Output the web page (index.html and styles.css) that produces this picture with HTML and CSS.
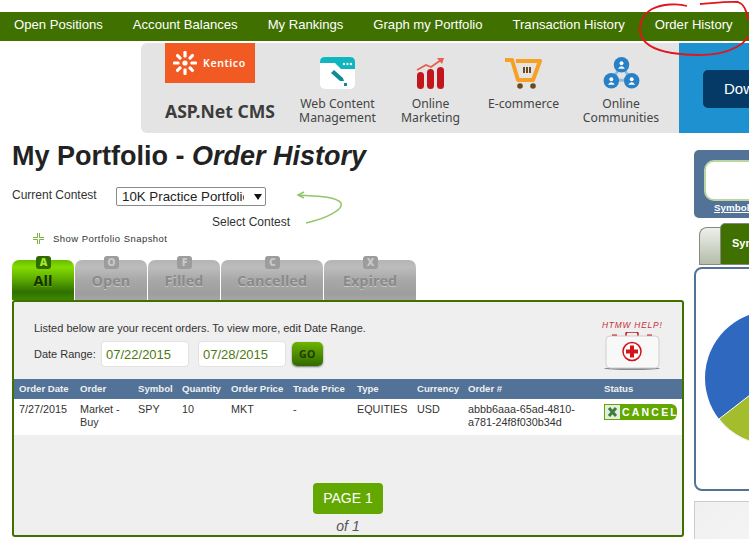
FILE: index.html
```html
<!DOCTYPE html>
<html lang="en">
<head>
    <meta charset="UTF-8">
    <title>My Portfolio - Order History</title>
    <link rel="stylesheet" href="styles.css">
</head>
<body>
    <nav class="topnav">
        <a>Open Positions</a>
        <a>Account Balances</a>
        <a>My Rankings</a>
        <a>Graph my Portfolio</a>
        <a>Transaction History</a>
        <a>Order History</a>
    </nav>
    <svg class="scribble" width="749" height="60" viewBox="0 0 749 60" fill="none" stroke="#e0161c" stroke-width="1.8">
        <path d="M687 6 C678 3 662 4 652 9 C643 14 639 24 640 32 C642 44 654 50 672 53 C692 56 716 56 730 50 C740 46 746 42 748 36"/>
        <path d="M700 4 C714 3 728 1 738 2 C744 4 747 12 748 20"/>
    </svg>

    <div class="ad">
        <div class="ad-brand">
            <div class="kentico-logo">
                <svg width="24" height="24" viewBox="-12 -12 24 24" fill="#fff">
                    <circle r="2.6"/>
                    <rect x="-1.6" y="-12" width="3.2" height="6.5" rx="1.2"/>
                    <rect x="-1.6" y="-12" width="3.2" height="6.5" rx="1.2" transform="rotate(45)"/>
                    <rect x="-1.6" y="-12" width="3.2" height="6.5" rx="1.2" transform="rotate(90)"/>
                    <rect x="-1.6" y="-12" width="3.2" height="6.5" rx="1.2" transform="rotate(135)"/>
                    <rect x="-1.6" y="-12" width="3.2" height="6.5" rx="1.2" transform="rotate(180)"/>
                    <rect x="-1.6" y="-12" width="3.2" height="6.5" rx="1.2" transform="rotate(225)"/>
                    <rect x="-1.6" y="-12" width="3.2" height="6.5" rx="1.2" transform="rotate(270)"/>
                    <rect x="-1.6" y="-12" width="3.2" height="6.5" rx="1.2" transform="rotate(315)"/>
                </svg>
                <span>Kentico</span>
            </div>
            <div class="ad-cms">ASP.Net CMS</div>
        </div>
        <div class="ad-features">
            <div class="feature">
                <svg width="35" height="32" viewBox="0 0 35 32">
                    <rect width="35" height="32" rx="5" fill="#fff"/>
                    <path d="M0 6 V5 Q0 0 5 0 H30 Q35 0 35 5 V12 H21 L15 6Z" fill="#0fb5bf"/>
                    <circle cx="24" cy="7" r="1.200" fill="#fff"/><circle cx="27.500" cy="7" r="1.200" fill="#fff"/><circle cx="31" cy="7" r="1.200" fill="#fff"/>
                    <path d="M11 16 L14 13 L23 21 L24 24 L20 24Z" fill="#0d8c98"/>
                    <rect x="24" y="26" width="3" height="3" fill="#0d8c98"/>
                </svg>
                <span>Web Content Management</span>
            </div>
            <div class="feature">
                <svg width="30" height="32" viewBox="0 0 30 32">
                    <path d="M1 13 L10 8 L15 10 L25 3" fill="none" stroke="#e8604c" stroke-width="1.800"/>
                    <path d="M21 1 H28 L26 7Z" fill="#e8604c"/>
                    <rect x="1" y="15" width="7" height="17" rx="3.500" fill="#c3161c"/>
                    <rect x="11" y="12" width="7" height="20" rx="3.500" fill="#c3161c"/>
                    <rect x="21" y="10" width="7" height="22" rx="3.500" fill="#c3161c"/>
                </svg>
                <span>Online Marketing</span>
            </div>
            <div class="feature">
                <svg width="39" height="32" viewBox="0 0 39 32">
                    <path d="M1 3 H8 L14 23 H29 L36 4 H12" fill="none" stroke="#f7a023" stroke-width="4" stroke-linejoin="round"/>
                    <rect x="19" y="10" width="2" height="6" fill="#6b4a20"/><rect x="22" y="10" width="2" height="6" fill="#6b4a20"/><rect x="25" y="10" width="2" height="6" fill="#6b4a20"/>
                    <circle cx="16" cy="29" r="2.800" fill="#6b4a20"/><circle cx="29" cy="29" r="2.800" fill="#6b4a20"/>
                </svg>
                <span>E-commerce</span>
            </div>
            <div class="feature">
                <svg width="37" height="32" viewBox="0 0 37 33">
                    <path d="M18.500 9 L8 24 H29Z" fill="none" stroke="#8dbde0" stroke-width="3"/>
                    <circle cx="18.500" cy="8" r="8" fill="#2a80c4"/>
                    <circle cx="8" cy="24.500" r="8" fill="#2a80c4"/>
                    <circle cx="29" cy="24.500" r="8" fill="#2a80c4"/>
                    <circle cx="18.500" cy="6.500" r="2" fill="#fff"/><path d="M15 12 Q18.500 7 22 12Z" fill="#fff"/>
                    <circle cx="8" cy="23" r="2" fill="#fff"/><path d="M4.500 28.500 Q8 23.500 11.500 28.500Z" fill="#fff"/>
                    <circle cx="29" cy="23" r="2" fill="#fff"/><path d="M25.500 28.500 Q29 23.500 32.500 28.500Z" fill="#fff"/>
                </svg>
                <span>Online Communities</span>
            </div>
        </div>
        <div class="ad-cta"><div class="ad-button">Download</div></div>
    </div>

    <div class="page">
        <main class="main">
            <h1>My Portfolio - <em>Order History</em></h1>

            <div class="contest">
                <div class="contest-row">
                    <label>Current Contest</label>
                    <div class="select">
                        <span class="select-text">10K Practice Portfolio</span>
                        <span class="select-arrow"></span>
                    </div>
                    <svg class="contest-arrow" width="50" height="36" viewBox="0 0 50 36" fill="none" stroke="#92c56a" stroke-width="1.500">
                        <path d="M2 4 C18 5 40 5 45 12 C48 18 32 27 10 32"/>
                        <path d="M8 1 L2 4 L8 7"/>
                    </svg>
                </div>
                <div class="contest-hint">Select Contest</div>
            </div>

            <div class="snapshot">
                <svg width="11" height="11" viewBox="0 0 11 11" fill="none" stroke="#7ab33c" stroke-width="1">
                    <path d="M4.500 0 V4.500 H0 M6.500 0 V4.500 H11 M4.500 11 V6.500 H0 M6.500 11 V6.500 H11"/>
                </svg>
                <span>Show Portfolio Snapshot</span>
            </div>

            <div class="tabs">
                <div class="tab tab-all active"><b>A</b>All</div>
                <div class="tab"><b>O</b>Open</div>
                <div class="tab"><b>F</b>Filled</div>
                <div class="tab tab-cancelled"><b>C</b>Cancelled</div>
                <div class="tab tab-expired"><b>X</b>Expired</div>
            </div>

            <section class="panel">
                <div class="panel-top">
                    <div>
                        <p class="intro">Listed below are your recent orders. To view more, edit Date Range.</p>
                        <div class="dates">
                            <span>Date Range:</span>
                            <div class="date-input">07/22/2015</div>
                            <div class="date-input">07/28/2015</div>
                            <div class="go">GO</div>
                        </div>
                    </div>
                    <div class="help">
                        <div class="help-title">HTMW HELP!</div>
                        <svg width="58" height="38" viewBox="0 0 58 38">
                            <path d="M24 4 V2 Q24 0 26 0 H34 Q36 0 36 2 V4" fill="none" stroke="#c3161c" stroke-width="1.500"/>
                            <rect x="10" y="2.500" width="5" height="1.500" fill="#c3161c"/><rect x="45" y="2.500" width="5" height="1.500" fill="#c3161c"/>
                            <ellipse cx="30" cy="36.500" rx="28" ry="1.500" fill="#8a8a8a"/>
                            <rect x="4" y="4" width="53" height="32" rx="4" fill="#f8f8f8" stroke="#cfcfcf"/>
                            <circle cx="30" cy="19.500" r="9" fill="#fff" stroke="#d3121a" stroke-width="1.500"/>
                            <path d="M28 13.500 H32 V17.500 H36 V21.500 H32 V25.500 H28 V21.500 H24 V17.500 H28Z" fill="#d3121a"/>
                        </svg>
                    </div>
                </div>

                <div class="orders">
                    <div class="orders-row orders-head">
                        <span>Order Date</span><span>Order</span><span>Symbol</span><span>Quantity</span><span>Order Price</span><span>Trade Price</span><span>Type</span><span>Currency</span><span>Order #</span><span>Status</span>
                    </div>
                    <div class="orders-row orders-body">
                        <span>7/27/2015</span><span>Market - Buy</span><span>SPY</span><span>10</span><span>MKT</span><span>-</span><span>EQUITIES</span><span>USD</span><span class="order-id">abbb6aaa-65ad-4810-a781-24f8f030b34d</span>
                        <span class="cancel">
                            <svg width="15" height="14" viewBox="0 0 15 14">
                                <rect width="15" height="14" fill="#e4eee0"/>
                                <path d="M4 3 L11 11 M11 3 L4 11" stroke="#3f7d3a" stroke-width="3"/>
                            </svg>
                            <i>CANCEL</i>
                        </span>
                    </div>
                </div>

                <div class="pager">
                    <div class="page-btn">PAGE 1</div>
                    <div class="page-of">of 1</div>
                </div>
            </section>
        </main>

        <aside class="side">
            <div class="lookup">
                <div class="lookup-input"></div>
                <a class="lookup-link">Symbol Lookup</a>
            </div>
            <div class="side-tabs">
                <div class="side-tab"></div>
                <div class="side-tab side-tab-on">Symbol</div>
            </div>
            <div class="pie-box">
                <svg width="55" height="220" viewBox="0 0 55 220">
                    <circle cx="76" cy="109" r="67" fill="#2f69bf"/>
                    <path d="M76 109 L23 150 A67 67 0 0 0 76 176Z" fill="#a3bd2c" stroke="#fff"/>
                </svg>
            </div>
            <div class="side-box"></div>
        </aside>
    </div>
</body>
</html>
```

FILE: styles.css
```css
html, body {
    overflow: hidden;
}
body {
    margin: 0;
    width: 749px;
    height: 539px;
    padding-top: 12px;
    box-sizing: border-box;
    font-family: "Liberation Sans", Arial, sans-serif;
    color: #333;
    background: #fff;
}

.topnav {
    display: flex;
    gap: 30px;
    height: 29px;
    box-sizing: border-box;
    padding: 5px 0 0 14px;
    line-height: 15px;
    background: #3f7000;
    color: #fff;
    font-size: 13.1px;
    white-space: nowrap;
}
.scribble {
    position: absolute;
    top: 0;
    left: 0;
}

.ad {
    display: flex;
    height: 90px;
    margin: 2px 0 0 141px;
    background: #e4e4e4;
    border-radius: 6px 0 0 6px;
    font-family: "Noto Sans", sans-serif;
    overflow: hidden;
}
.ad-brand {
    width: 110px;
    margin-left: 24px;
    flex: none;
}
.kentico-logo {
    display: flex;
    align-items: center;
    gap: 6px;
    width: 90px;
    height: 40px;
    padding-left: 8px;
    box-sizing: border-box;
    background: #f15a22;
    color: #fff;
    font-size: 10.5px;
    font-weight: 600;
    letter-spacing: 0.6px;
}
.ad-cms {
    margin-top: 16px;
    font-size: 17.6px;
    font-weight: 700;
    color: #3c3c3c;
    white-space: nowrap;
}
.ad-features {
    display: grid;
    grid-template-columns: 93px 93px 93px 102px;
    width: 388px;
    flex: none;
    margin-left: 16px;
    padding-top: 14px;
    box-sizing: border-box;
}
.feature {
    display: flex;
    flex-direction: column;
    align-items: center;
    gap: 8px;
    text-align: center;
    font-size: 12.2px;
    line-height: 14px;
    color: #444;
}
.feature span {
    width: 86px;
}
.ad-cta {
    flex: 1;
    padding: 27px 0 0 24px;
    background: #1e92d0;
}
.ad-button {
    width: 100px;
    height: 38px;
    line-height: 38px;
    padding-left: 21px;
    background: #063a66;
    border-radius: 5px;
    color: #fff;
    font-family: "Liberation Sans", sans-serif;
    font-size: 15px;
}

.page {
    display: flex;
    gap: 10px;
    padding-left: 12px;
}
.main {
    width: 672px;
    flex: none;
}
h1 {
    margin: 7px 0 0;
    font-size: 27px;
    line-height: 32px;
    font-weight: 700;
    color: #222;
}

.contest {
    margin-top: 15px;
    height: 40px;
    font-size: 12px;
}
.contest-row {
    display: flex;
    position: relative;
}
.contest-row label {
    width: 104px;
    line-height: 16px;
}
.select {
    display: flex;
    align-items: center;
    width: 150px;
    height: 19px;
    box-sizing: border-box;
    padding-left: 5px;
    background: #fff;
    border: 1px solid #8a8a8a;
    border-radius: 2px;
    color: #222;
    font-size: 13.3px;
}
.select-text {
    width: 122px;
    overflow: hidden;
    white-space: nowrap;
}
.select-arrow {
    width: 0;
    height: 0;
    margin-left: 10px;
    border: 4px solid transparent;
    border-top: 6px solid #111;
    border-bottom: 0;
}
.contest-arrow {
    position: absolute;
    left: 284px;
    top: 4px;
}
.contest-hint {
    margin: 9px 0 0 200px;
}

.snapshot {
    display: flex;
    align-items: center;
    gap: 9px;
    height: 14px;
    margin-top: 4px;
    padding-left: 21px;
    font-size: 9.5px;
    letter-spacing: 0.45px;
}

.tabs {
    display: flex;
    gap: 1px;
    margin-top: 15px;
}
.tab {
    position: relative;
    width: 72px;
    height: 40px;
    box-sizing: border-box;
    padding-top: 11px;
    text-align: center;
    background: linear-gradient(#b4b4b4, #bdbdbd 18%, #a8a8a8 50%, #9e9e9e 85%, #a6a6a6);
    border-radius: 7px 7px 0 0;
    color: #8a8a8a;
    font-family: "Open Sans", sans-serif;
    font-size: 14.5px;
    font-weight: 700;
    line-height: 20px;
    text-shadow: 0 1px 0 #c8c8c8;
}
.tab b {
    position: absolute;
    top: -4px;
    left: 50%;
    width: 15px;
    height: 13px;
    margin-left: -7px;
    background: #9c9c9c;
    border-radius: 3px;
    color: #c8c8c8;
    font-size: 10.5px;
    line-height: 13px;
    text-shadow: none;
}
.tab-all {
    width: 62px;
}
.tab-cancelled {
    width: 102px;
}
.tab-expired {
    width: 92px;
}
.tab.active {
    background: linear-gradient(#68ba00, #84dc00 18%, #5aa800 50%, #2f7000 80%, #3f8800);
    color: #173000;
    text-shadow: 0 1px 0 #6db010;
}
.tab.active b {
    background: #2f6a00;
    color: #a5e82a;
}

.panel {
    height: 237px;
    box-sizing: border-box;
    border: 2px solid #3f7000;
    border-radius: 3px;
    background: #efefef;
}
.panel-top {
    display: flex;
    justify-content: space-between;
    height: 77px;
    padding: 20px 20px 0 20px;
    box-sizing: border-box;
}
.intro {
    margin: 0;
    font-size: 11px;
    line-height: 13px;
}
.dates {
    display: flex;
    align-items: center;
    margin-top: 6px;
    font-size: 11px;
}
.dates span {
    width: 67px;
    white-space: nowrap;
}
.date-input {
    width: 88px;
    height: 26px;
    line-height: 26px;
    box-sizing: border-box;
    padding-left: 4px;
    margin-right: 9px;
    background: #fff;
    border: 1px solid #e2e2e2;
    border-radius: 4px;
    color: #4f7a10;
    font-size: 13px;
}
.date-input + .date-input {
    margin-right: 6px;
}
.go {
    width: 31px;
    height: 24px;
    line-height: 24px;
    text-align: center;
    background: linear-gradient(#6cb400, #2f6a00);
    border-radius: 5px;
    box-shadow: 0 1px 2px #777;
    color: #1f3a00;
    font-family: "Open Sans", sans-serif;
    font-size: 10.5px;
    font-weight: 700;
    letter-spacing: 0.5px;
}
.help {
    width: 60px;
    margin-top: -2px;
}
.help-title {
    margin-bottom: 2px;
    color: #c8303c;
    font-size: 8.4px;
    font-style: italic;
    letter-spacing: 0.8px;
    line-height: 10px;
    white-space: nowrap;
}
.help svg {
    display: block;
}

.orders-row {
    display: grid;
    grid-template-columns: 61px 58px 44px 49px 62px 64px 60px 51px 136px 1fr;
    padding-left: 5px;
    font-size: 10.8px;
}
.orders-head {
    height: 20px;
    line-height: 20px;
    background: #527298;
    color: #f0f0f0;
    font-weight: 700;
    font-size: 9.6px;
    white-space: nowrap;
}
.orders-body {
    height: 36px;
    padding-top: 4px;
    box-sizing: border-box;
    background: #fff;
    line-height: 13px;
    color: #333;
}
.order-id {
    width: 112px;
    word-break: break-word;
}
.cancel {
    display: flex;
    align-items: center;
    width: 73px;
    height: 16px;
    margin-top: 1px;
    padding-left: 1px;
    box-sizing: border-box;
    background: #62a800;
    border-radius: 0 6px 6px 0;
}
.cancel svg {
    flex: none;
}
.cancel i {
    margin-left: 2px;
    color: #fff;
    font-size: 10.5px;
    font-style: normal;
    font-weight: 700;
    letter-spacing: 2.2px;
}

.pager {
    margin-top: 48px;
    text-align: center;
}
.page-btn {
    width: 70px;
    height: 31px;
    line-height: 31px;
    margin: 0 auto;
    background: #62a800;
    border-radius: 4px;
    color: #fff;
    font-size: 14px;
}
.page-of {
    margin-top: 4px;
    font-size: 14px;
    font-style: italic;
    line-height: 16px;
    color: #555;
}

.side {
    width: 55px;
    flex: none;
    margin-top: 17px;
}
.lookup {
    width: 200px;
    height: 68px;
    box-sizing: border-box;
    padding: 10px 0 0 10px;
    background: #527298;
    border-radius: 5px;
}
.lookup-input {
    height: 37px;
    background: #fff;
    border: 2px solid #bcd6a2;
    border-radius: 10px;
}
.lookup-link {
    display: block;
    margin-left: 10px;
    color: #fff;
    font-size: 9.8px;
    font-weight: 700;
    line-height: 13px;
    text-decoration: underline;
}
.side-tabs {
    display: flex;
    align-items: flex-end;
    width: 100px;
    height: 42px;
    margin: 5px 0 0 5px;
}
.side-tab {
    width: 21px;
    height: 38px;
    box-sizing: border-box;
    background: linear-gradient(#eef0ea, #b4bcaa);
    border: 1px solid #888;
    border-right: 0;
    border-radius: 8px 0 0 0;
}
.side-tab-on {
    width: 70px;
    height: 42px;
    padding: 13px 0 0 11px;
    background: #3f7000;
    border: 1px solid #888;
    border-radius: 5px 0 0 0;
    color: #fff;
    font-size: 11px;
    font-weight: 700;
}
.pie-box {
    width: 200px;
    height: 224px;
    margin-top: 2px;
    box-sizing: border-box;
    background: #fff;
    border: 2px solid #527298;
    border-radius: 8px;
}
.pie-box svg {
    display: block;
}
.side-box {
    width: 200px;
    height: 60px;
    margin-top: 10px;
    background: linear-gradient(135deg, #f0f0f0, #fafafa);
    border: 1px solid #ccc;
}
```
